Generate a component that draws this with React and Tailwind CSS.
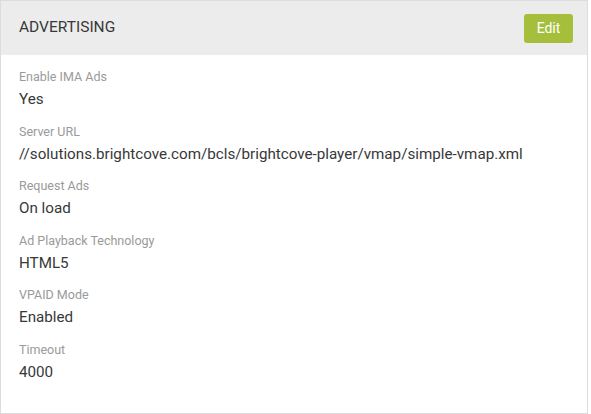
const fields = [
  { label: "Enable IMA Ads", value: "Yes" },
  { label: "Server URL", value: "//solutions.brightcove.com/bcls/brightcove-player/vmap/simple-vmap.xml" },
  { label: "Request Ads", value: "On load" },
  { label: "Ad Playback Technology", value: "HTML5" },
  { label: "VPAID Mode", value: "Enabled" },
  { label: "Timeout", value: "4000" },
];

export default function App() {
  return (
    <div className="w-[591px] h-[414px] bg-white" style={{ fontFamily: "Roboto, sans-serif" }}>
      <div className="w-[588px] h-[414px] border border-[#dcdcdc] flex flex-col">
        <div className="h-[54px] bg-[#ececec] flex items-center justify-between pl-[18px] pr-[14px]">
          <h2 className="text-[15.5px] text-[#383838] pb-[1px]">ADVERTISING</h2>
          <button className="w-[49px] h-[29px] rounded-[3px] bg-[#a5bf3c] text-white text-[14px]">Edit</button>
        </div>
        <div className="pt-[13px] px-[18px] flex flex-col gap-[12.6px]">
          {fields.map((f) => (
            <div key={f.label} className="flex flex-col gap-[2px]">
              <div className="text-[12.5px] leading-[18px] text-[#9a9a9a]">{f.label}</div>
              <div className="text-[15.2px] leading-[22px] text-[#383838]">{f.value}</div>
            </div>
          ))}
        </div>
      </div>
    </div>
  );
}
